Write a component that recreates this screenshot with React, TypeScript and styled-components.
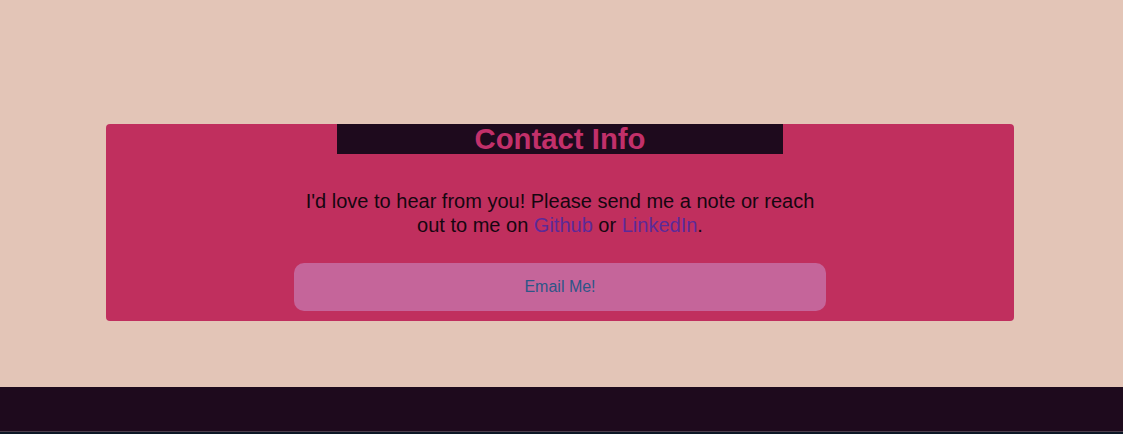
import React from "react";
import styled, { createGlobalStyle } from "styled-components";

const Global = createGlobalStyle`
  html, body { margin: 0; padding: 0; }
  body {
    background: #e3c5b7;
    font-family: "Liberation Sans", Arial, sans-serif;
  }
`;

const Page = styled.div`
  display: flex;
  flex-direction: column;
  min-height: 434px;
  background: #e3c5b7;
`;

const Main = styled.main`
  display: flex;
  justify-content: center;
  padding: 124px 3px 66px 0;
`;

const Card = styled.section`
  width: 908px;
  box-sizing: border-box;
  background: #c02f5e;
  border-radius: 4px;
  padding: 0 8px 10px;
  display: flex;
  flex-direction: column;
  align-items: center;
`;

const TitleBar = styled.h2`
  width: 50%;
  margin: 0;
  background: #1e0a1d;
  color: #c2306a;
  font-size: 29.3px;
  font-weight: 700;
  line-height: 30px;
  height: 30px;
  text-align: center;
`;

const Message = styled.p`
  width: 532px;
  margin: 35px 0 26px;
  font-size: 20px;
  line-height: 24px;
  color: #160610;
  text-align: center;
`;

const Link = styled.a`
  color: #5b2a99;
  text-decoration: none;
`;

const EmailButton = styled.a`
  display: flex;
  align-items: center;
  justify-content: center;
  width: 532px;
  height: 48px;
  border-radius: 10px;
  background: #c5659a;
  color: #2d5688;
  font-size: 16px;
  text-decoration: none;
`;

const Footer = styled.footer`
  height: 44px;
  background: #1e0a1d;
  border-bottom: 1px solid #4c3e4c;
`;

const Edge = styled.div`
  height: 2px;
  background: #0d1826;
`;

export default function App() {
  return (
    <>
      <Global />
      <Page>
        <Main>
          <Card>
            <TitleBar>Contact Info</TitleBar>
            <Message>
              I'd love to hear from you! Please send me a note or reach out to me on{" "}
              <Link href="#">Github</Link> or <Link href="#">LinkedIn</Link>.
            </Message>
            <EmailButton href="#">Email Me!</EmailButton>
          </Card>
        </Main>
        <Footer />
        <Edge />
      </Page>
    </>
  );
}
